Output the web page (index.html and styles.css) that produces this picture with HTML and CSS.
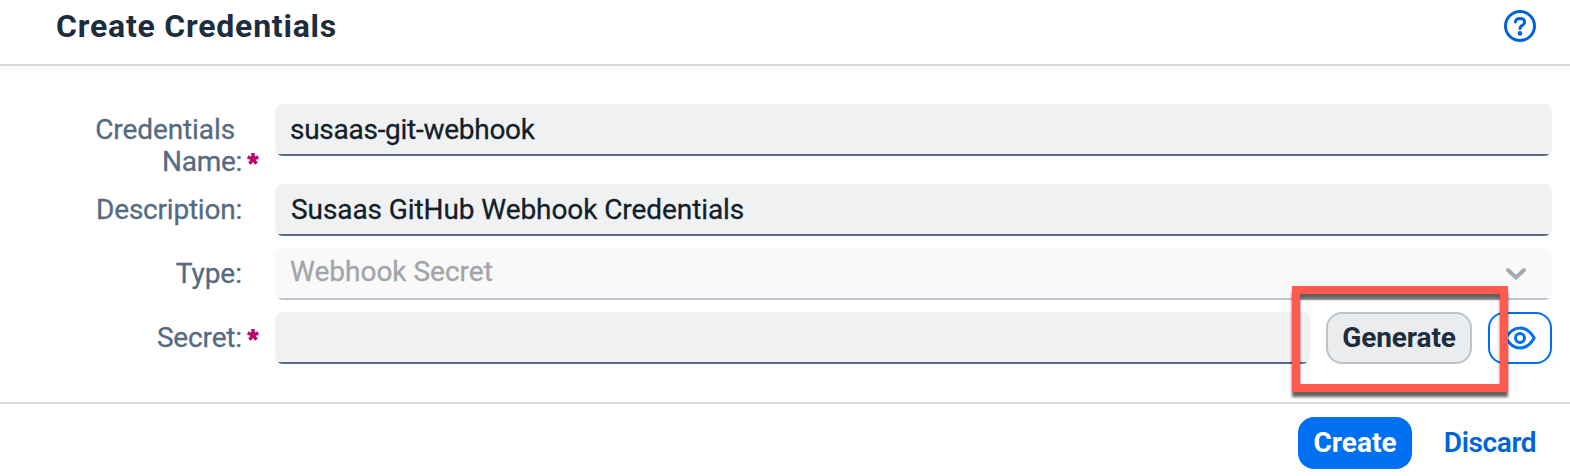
FILE: index.html
```html
<!DOCTYPE html>
<html lang="en">
<head>
<meta charset="utf-8">
<title>Create Credentials</title>
<link rel="stylesheet" href="styles.css">
</head>
<body>
<main class="dialog">
  <header class="header">
    <h1 class="title"><span class="t-title">Create Credentials</span></h1>
    <svg class="help" width="32" height="32" viewBox="0 0 32 32" fill="none" stroke="#0064d9" stroke-width="3" stroke-linecap="round" stroke-linejoin="round">
      <circle cx="16" cy="16" r="14.5"/>
      <path d="M11.4 12C11.6 9.6 13.3 8.5 16 8.5C18.8 8.5 20.6 10 20.6 12.2C20.6 15.6 16 15.1 16 18.4"/>
      <circle cx="16" cy="23.4" r="2.3" fill="#0064d9" stroke="none"/>
    </svg>
  </header>
  <form class="form">
    <div class="row row-tall">
      <label class="label"><span class="t-cred">Credentials</span><br><span class="t-name">Name:</span></label>
      <svg class="star star-low" viewBox="0 0 12 12"><path d="M6 6V0M6 6L.6 4.2M6 6L11.4 4.2M6 6L2.6 10.7M6 6L9.4 10.7"/></svg>
      <div class="field"><span class="t-git">susaas-git-webhook</span></div>
    </div>
    <div class="row">
      <label class="label"><span class="t-desc">Description:</span></label>
      <div class="field"><span class="t-susaas">Susaas GitHub Webhook Credentials</span></div>
    </div>
    <div class="row">
      <label class="label"><span class="t-type">Type:</span></label>
      <div class="field field-disabled"><span class="t-hook">Webhook Secret</span>
        <svg class="chevron" width="20" height="12" viewBox="0 0 20 12" fill="none" stroke="#a2abb5" stroke-width="4" stroke-linecap="round" stroke-linejoin="miter"><path d="M2.2 2.2L10 9.4L17.8 2.2"/></svg>
      </div>
    </div>
    <div class="row">
      <label class="label"><span class="t-secret">Secret:</span></label>
      <svg class="star" viewBox="0 0 12 12"><path d="M6 6V0M6 6L.6 4.2M6 6L11.4 4.2M6 6L2.6 10.7M6 6L9.4 10.7"/></svg>
      <div class="field"></div>
      <button type="button" class="button generate"><span class="t-gen">Generate</span></button>
      <button type="button" class="button reveal" aria-label="Show secret">
        <svg width="32" height="24" viewBox="0 0 32 24" fill="none" stroke="#0070f2" stroke-width="3" stroke-linejoin="round"><path d="M1.8 12C5.5 5.5 10 2 16 2S26.500 5.500 30.200 12C26.500 18.500 22 22 16 22S5.500 18.500 1.800 12Z"/><circle cx="16" cy="12" r="4.500"/></svg>
      </button>
    </div>
  </form>
  <footer class="footer">
    <button type="button" class="button create"><span class="t-create">Create</span></button>
    <button type="button" class="button discard"><span class="t-discard">Discard</span></button>
  </footer>
  <div class="highlight"></div>
</main>
</body>
</html>
```
FILE: styles.css
```css
* { box-sizing: border-box; }
body { margin: 0; background: #fff; font-family: Roboto, "Liberation Sans", sans-serif; font-size: 28px; line-height: 32px; }
.dialog { position: relative; width: 1570px; height: 476px; overflow: hidden; }
.header { height: 66px; padding: 10px 34px 0 56px; display: flex; justify-content: space-between; align-items: flex-start; border-bottom: 2px solid #d9d9d9; }
.title { margin: 0; font-size: 32px; line-height: 32px; font-weight: 700; color: #1d2d3e; white-space: nowrap; }
.help { flex: none; }
.form { height: 336px; padding: 38px 18px 0 0; background: linear-gradient(#f8f8f9, #fff 8px); }
.row { display: flex; height: 52px; margin-bottom: 12px; }
.row-tall { height: 68px; }
.label { width: 242px; flex: none; padding-top: 10px; text-align: right; color: #556b82; -webkit-text-stroke: .3px; }
.star { width: 12px; height: 12px; margin: 17px -12px 0 0; position: relative; left: 5px; flex: none; overflow: visible; stroke: #ba066c; stroke-width: 3.4; fill: none; }
.star-low { margin-top: 49px; }
.field { flex: 1; margin-left: 33px; height: 52px; padding: 10px 26px 0 16px; display: flex; justify-content: space-between; border-radius: 8px; white-space: nowrap; color: #131e29; -webkit-text-stroke: .3px; background: linear-gradient(#556b82, #556b82) 0 100% / 100% 2px no-repeat #eff1f2; }
.field-disabled { padding-top: 8px; color: #a1a5a9; background: linear-gradient(#bcc3ce, #bcc3ce) 0 100% / 100% 2px no-repeat #f9f9f9; }
.chevron { margin-top: 12px; }
.button { height: 52px; padding: 0; display: flex; align-items: center; justify-content: center; border: 2px solid transparent; border-radius: 16px; background: none; font: 700 28px/32px Roboto, "Liberation Sans", sans-serif; white-space: nowrap; }
.generate { width: 146px; margin: 0 16px; color: #1d2d3e; background: #eaecee; border-color: #bcc3ca; }
.reveal { width: 64px; border-color: #0070f2; background: #fff; }
.footer { height: 74px; padding: 13px 18px 0 0; display: flex; justify-content: flex-end; gap: 16px; border-top: 2px solid #d9d9d9; }
.create { width: 114px; color: #fff; background: #0070f2; }
.discard { width: 124px; color: #0064d9; font-weight: 600; }
.highlight { position: absolute; left: 1292px; top: 286px; width: 216px; height: 106px; border: 8px solid #ff5a4c; filter: drop-shadow(0 5px 1.5px rgba(0, 0, 0, .62)); }
.t-title { letter-spacing: .78px; }
.t-cred { margin-right: 7px; letter-spacing: -.1px; }
.t-name { letter-spacing: -.3px; }
.t-git { margin-left: -1px; letter-spacing: -.27px; }
.t-desc { letter-spacing: -.22px; }
.t-susaas { letter-spacing: -.08px; }
.t-hook { margin-left: -1px; }
.t-secret { letter-spacing: -.15px; }
.t-gen { letter-spacing: -.1px; }
.t-discard { letter-spacing: -.4px; }
```
